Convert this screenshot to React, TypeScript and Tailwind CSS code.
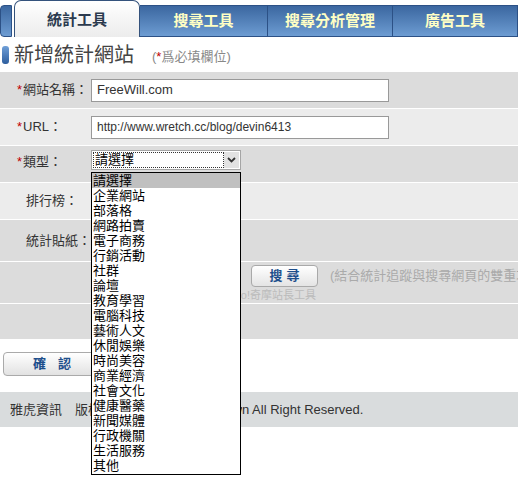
import React from 'react';

const FONT = "font-['Liberation_Sans','Noto_Sans_CJK_TC',sans-serif]";

const tabs = ['搜尋工具', '搜尋分析管理', '廣告工具'];

const categories = [
  '請選擇', '企業網站', '部落格', '網路拍賣', '電子商務', '行銷活動', '社群', '論壇',
  '教育學習', '電腦科技', '藝術人文', '休閒娛樂', '時尚美容', '商業經濟', '社會文化',
  '健康醫藥', '新聞媒體', '行政機關', '生活服務', '其他',
];

function Req() {
  return <span className="text-[#c00000] mr-[1px]">*</span>;
}

function Row({ h, bg, children }: { h: string; bg: string; children?: React.ReactNode }) {
  return <div className={`${h} ${bg} border-b border-white flex items-center`}>{children}</div>;
}

export default function App() {
  return (
    <div className={`relative w-[518px] h-[478px] overflow-hidden bg-white text-[#333] ${FONT}`}>
      {/* tabs */}
      <div className="flex items-end h-[37px]">
        <div className="w-[12px] h-[32px] mr-[2px] rounded-l-[4px] border border-[#2c5186] bg-gradient-to-b from-[#3b67a0] to-[#6d9cd2]" />
        <div className="w-[126px] h-[37px] rounded-t-[7px] border border-b-0 border-[#34527c] bg-gradient-to-b from-white to-[#ececec] flex items-center justify-center pt-[2px] text-[15px] font-bold text-[#2b3a4e]">
          統計工具
        </div>
        {tabs.map((t, i) => (
          <div
            key={t}
            className={`${i === 0 ? 'w-[128px]' : 'w-[125px]'} h-[32px] border-y border-r border-[#2c5186] bg-gradient-to-b from-[#3b67a0] to-[#6d9cd2] flex items-center justify-center text-[15px] font-bold text-[#ffffc4]`}
          >
            {t}
          </div>
        ))}
      </div>

      {/* title */}
      <div className="flex items-center h-[34px] pt-[2px]">
        <div className="ml-[2px] w-[7px] h-[18px] rounded-[3px] bg-gradient-to-b from-[#6f9fd8] to-[#2e5e9e]" />
        <div className="ml-[5px] text-[20px] text-[#444] leading-none">新增統計網站</div>
        <div className="ml-[18px] mt-[4px] text-[13px] text-[#888]">
          (<span className="text-[#c00000]">*</span>爲必填欄位)
        </div>
      </div>

      {/* form */}
      <div className="mt-[1px] text-[13px]">
        <Row h="h-[37px]" bg="bg-[#dcdcdc]">
          <div className="w-[91px] pl-[17px]"><Req />網站名稱：</div>
          <div className="w-[298px] h-[23px] border border-[#999] bg-white flex items-center pl-[5px] text-[13px] text-[#333]">FreeWill.com</div>
        </Row>
        <Row h="h-[37px]" bg="bg-[#ececec]">
          <div className="w-[91px] pl-[17px]"><Req />URL：</div>
          <div className="w-[298px] h-[23px] border border-[#999] bg-white flex items-center pl-[5px] text-[12px] text-[#333]">http://www.wretch.cc/blog/devin6413</div>
        </Row>
        <Row h="h-[37px]" bg="bg-[#dcdcdc]">
          <div className="w-[91px] pl-[17px] -mt-[4px]"><Req />類型：</div>
          <div className="-mt-[8px] w-[150px] h-[20px] border border-[#a5a5a5] bg-white flex items-center p-[1px]">
            <div className="flex-1 h-full border border-dotted border-[#333] flex items-center pl-[1px] text-[13px] text-black">請選擇</div>
            <div className="w-[15px] h-full bg-[#e2e2e2] flex items-center justify-center">
              <svg width="9" height="6" viewBox="0 0 9 6"><path d="M1 1 L4.5 4.5 L8 1" fill="none" stroke="#333" strokeWidth="1.8" /></svg>
            </div>
          </div>
        </Row>
        <Row h="h-[37px]" bg="bg-[#ececec]">
          <div className="pl-[26px]">排行榜：</div>
        </Row>
        <Row h="h-[42px]" bg="bg-[#dcdcdc]">
          <div className="pl-[26px]">統計貼紙：</div>
        </Row>
        <div className="h-[42px] bg-[#dcdcdc] border-b border-white flex flex-col overflow-hidden">
          <div className="flex items-center pt-[3px]">
            <button className="shrink-0 ml-[251px] w-[67px] h-[22px] rounded-[4px] border border-[#a9a9a9] bg-gradient-to-b from-white to-[#e4e4e4] text-[13px] font-bold text-[#1e4f8c] tracking-[4px] pl-[4px]">
              搜尋
            </button>
            <div className="shrink-0 ml-[12px] whitespace-nowrap text-[13px] text-[#aaa]">(結合統計追蹤與搜尋網頁的雙重功能)</div>
          </div>
          <div className="w-[316px] text-right text-[11px] text-[#bbb] leading-[13px] mt-[2px] whitespace-nowrap">Yahoo!奇摩站長工具</div>
        </div>
        <div className="h-[35px] bg-[#dcdcdc]" />
      </div>

      <div className="pl-[3px] mt-[12px]">
        <button className="w-[98px] h-[24px] rounded-[4px] border border-[#aaa] bg-gradient-to-b from-white to-[#e2e2e2] text-[13px] font-bold text-[#1e4f8c] tracking-[12px] pl-[12px]">
          確認
        </button>
      </div>

      <div className="mt-[16px] h-[35px] bg-[#d9dcdd] flex items-center pl-[10px] text-[13px] text-[#333] whitespace-nowrap">
        <span className="inline-block w-[232px] overflow-hidden">雅虎資訊　版權所有 © 2009 Yahoo! Taiwa</span>
        <span>n All Right Reserved.</span>
      </div>

      {/* open dropdown */}
      <div className="absolute left-[91px] top-[172px] w-[150px] h-[303px] border border-black bg-white text-[13px] text-black">
        {categories.map((c, i) => (
          <div key={c} className={`h-[15px] leading-[15px] pl-[1px] ${i === 0 ? 'bg-[#c0c0c0]' : ''}`}>
            {c}
          </div>
        ))}
      </div>
    </div>
  );
}
